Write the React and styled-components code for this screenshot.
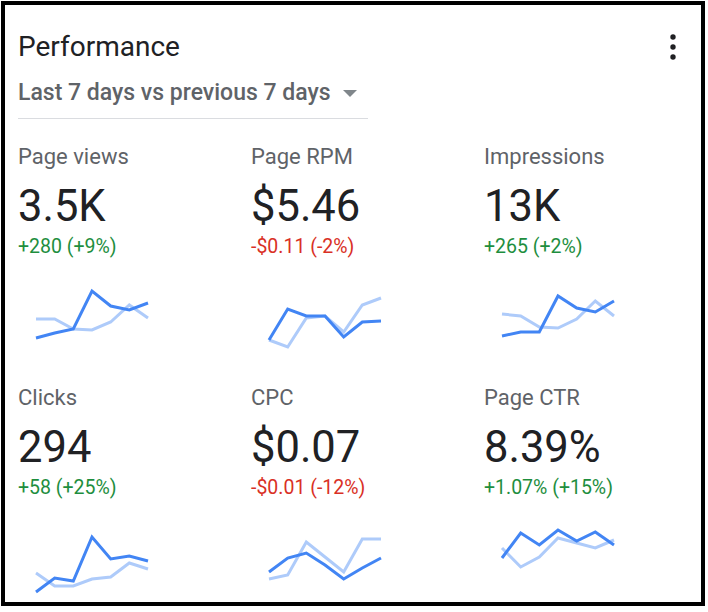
import React from "react";
import styled, { createGlobalStyle } from "styled-components";

const GlobalStyle = createGlobalStyle`
  html, body {
    margin: 0;
    padding: 0;
    background: #ffffff;
  }
  body {
    font-family: Roboto, "Noto Sans", Arial, sans-serif;
    -webkit-font-smoothing: antialiased;
  }
`;

const Card = styled.section`
  box-sizing: border-box;
  margin: 1px 0 0 1px;
  width: 704px;
  height: 605px;
  border: 4px solid #000000;
  background: #ffffff;
  padding: 26px 0 0 13px;
  overflow: hidden;
`;

const Header = styled.header`
  display: flex;
  align-items: center;
  justify-content: space-between;
  padding-right: 16px;
`;

const Title = styled.h2`
  margin: 0;
  font-size: 28px;
  line-height: 32px;
  font-weight: 400;
  color: #202124;
`;

const MenuButton = styled.button`
  display: flex;
  align-items: center;
  justify-content: center;
  width: 24px;
  height: 32px;
  padding: 0;
  border: 0;
  background: transparent;
  color: #202124;
  cursor: pointer;
`;

const RangeSelect = styled.div`
  display: inline-flex;
  align-items: center;
  margin-top: 17px;
  padding: 0 11px 12px 0;
  border-bottom: 1px solid #dadce0;
  font-size: 23px;
  line-height: 26px;
  font-weight: 500;
  color: #5f6368;
  cursor: pointer;
`;

const Caret = styled.svg`
  margin-left: 12px;
  width: 14px;
  height: 7px;
  fill: #80868b;
`;

const Grid = styled.div`
  display: grid;
  grid-template-columns: 233px 233px 1fr;
  row-gap: 32px;
  margin-top: 26px;
`;

const Metric = styled.div`
  display: flex;
  flex-direction: column;
`;

const Label = styled.div`
  font-size: 22px;
  line-height: 24px;
  color: #5f6368;
`;

const Value = styled.div`
  margin-top: 13px;
  font-size: 43.5px;
  line-height: 50px;
  color: #202124;
`;

const Delta = styled.div`
  margin-top: 4px;
  font-size: 19.5px;
  line-height: 22px;
  color: ${(p) => (p.$down ? "#d93025" : "#1e8e3e")};
`;

const Spark = styled.svg`
  display: block;
  margin: 24px 0 0 14px;
  width: 140px;
  height: 72px;
  overflow: visible;
`;

const XS = [4, 22.7, 41.3, 60, 78.7, 97.3, 116];

const toPoints = (ys) => ys.map((y, i) => `${XS[i]},${y}`).join(" ");

const metrics = [
  {
    label: "Page views",
    value: "3.5K",
    delta: "+280 (+9%)",
    now: [56, 51, 47, 9, 24, 28, 21],
    prev: [37, 37, 47, 48, 40, 23, 36],
  },
  {
    label: "Page RPM",
    value: "$5.46",
    delta: "-$0.11 (-2%)",
    down: true,
    now: [58, 27, 34, 34, 55, 40, 39],
    prev: [58, 65, 36, 34, 50, 23, 16],
  },
  {
    label: "Impressions",
    value: "13K",
    delta: "+265 (+2%)",
    now: [54, 50, 50, 14, 26, 30, 19],
    prev: [32, 34, 45, 46, 37, 19, 34],
  },
  {
    label: "Clicks",
    value: "294",
    delta: "+58 (+25%)",
    now: [69, 55, 58, 14, 36, 33, 38],
    prev: [50, 63, 63, 56, 54, 40, 46],
  },
  {
    label: "CPC",
    value: "$0.07",
    delta: "-$0.01 (-12%)",
    down: true,
    now: [49, 35, 30, 42, 56, 45, 35],
    prev: [56, 52, 19, 34, 49, 16, 16],
  },
  {
    label: "Page CTR",
    value: "8.39%",
    delta: "+1.07% (+15%)",
    now: [35, 10, 22, 7, 18, 9, 22],
    prev: [25, 44, 34, 15, 20, 25, 17],
  },
];

function Sparkline({ now, prev }) {
  return (
    <Spark viewBox="0 0 140 72">
      <polyline
        points={toPoints(prev)}
        fill="none"
        stroke="#aecbfa"
        strokeWidth="3"
        strokeLinejoin="miter"
      />
      <polyline
        points={toPoints(now)}
        fill="none"
        stroke="#4285f4"
        strokeWidth="3"
        strokeLinejoin="miter"
      />
    </Spark>
  );
}

function MoreIcon() {
  return (
    <svg width="10" height="30" viewBox="0 0 10 30" aria-hidden="true">
      <circle cx="5" cy="5" r="2.7" fill="currentColor" />
      <circle cx="5" cy="15" r="2.7" fill="currentColor" />
      <circle cx="5" cy="25" r="2.7" fill="currentColor" />
    </svg>
  );
}

export default function App() {
  return (
    <>
      <GlobalStyle />
      <Card>
        <Header>
          <Title>Performance</Title>
          <MenuButton aria-label="More options">
            <MoreIcon />
          </MenuButton>
        </Header>
        <RangeSelect>
          Last 7 days vs previous 7 days
          <Caret viewBox="0 0 10 5" aria-hidden="true">
            <path d="M0 0l5 5 5-5z" />
          </Caret>
        </RangeSelect>
        <Grid>
          {metrics.map((m) => (
            <Metric key={m.label}>
              <Label>{m.label}</Label>
              <Value>{m.value}</Value>
              <Delta $down={m.down}>{m.delta}</Delta>
              <Sparkline now={m.now} prev={m.prev} />
            </Metric>
          ))}
        </Grid>
      </Card>
    </>
  );
}
